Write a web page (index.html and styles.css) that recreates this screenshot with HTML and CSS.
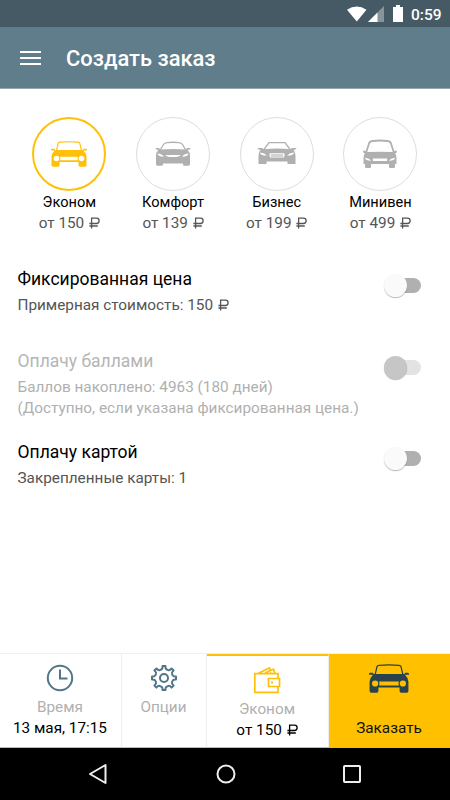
FILE: index.html
```html
<!DOCTYPE html>
<html lang="ru">
<head>
<meta charset="utf-8">
<title>Создать заказ</title>
<link rel="stylesheet" href="styles.css">
</head>
<body>
<svg class="defs" aria-hidden="true">
  <symbol id="car" viewBox="0 0 36 26">
    <path fill="none" stroke="currentColor" stroke-width="1.1" d="M5.500 9.500 7.300 2Q7.600 1.200 9 1.100Q18 .4 27 1.100Q28.400 1.200 28.700 2L30.500 9.500"/>
    <path fill="currentColor" fill-rule="evenodd" d="M0 9q0-1.200 1.200-1.200h2q.8 0 .8 1.200h28q0-1.200.8-1.200h2Q36 7.800 36 9v.6h-3.600q3.100 3 3.100 6.400V24q0 1.800-1.500 1.800h-5q-1.500 0-1.500-1.800v-3H8.500v3q0 1.800-1.500 1.800H2Q.5 25.800.5 24v-8q0-3.400 3.100-6.400H0zM5.500 14.700a2.800 2.800 0 1 0 0 5.600 2.800 2.800 0 0 0 0-5.600zm25 0a2.800 2.800 0 1 0 0 5.600 2.800 2.800 0 0 0 0-5.600zM9 15.800q1 1.700 0 3.400h18q-1-1.700 0-3.400z"/>
  </symbol>
  <symbol id="ruble" viewBox="0 0 11 12">
    <path fill="none" stroke="currentColor" stroke-width="1.300" d="M2.600 11.500V1.100H7.500Q10.100 1.100 10.100 3.700T7.500 6.500H.4M.4 9H8.800"/>
  </symbol>
</svg>
<div class="status">
  <svg width="20" height="16" viewBox="0 0 20 16"><path fill="#fff" d="M0 3.700Q9.700-2.600 19.500 3.700L9.800 15.500z"/></svg>
  <svg class="signal" width="16" height="16" viewBox="0 0 16 16"><path fill="#87949b" d="M16 0v16H0z"/><path fill="#fff" d="M9.500 6.500V16H0z"/></svg>
  <svg class="battery" width="10" height="17" viewBox="0 0 10 17"><path fill="#fff" d="M3 0h4v2h3v15H0V2h3z"/></svg>
  <span>0:59</span>
</div>
<header class="appbar">
  <svg width="21" height="16" viewBox="0 0 21 16"><path stroke="#fff" stroke-width="2" d="M0 2h21M0 8h21M0 14h21"/></svg>
  <h1>Создать заказ</h1>
</header>
<main>
  <div class="tariffs">
    <div class="tariff active">
      <div class="ring"><svg width="36" height="26"><use href="#car"/></svg></div>
      <b>Эконом</b><span class="price">от 150 <svg class="rub"><use href="#ruble"/></svg></span>
    </div>
    <div class="tariff">
      <div class="ring"><svg width="36" height="26" viewBox="0 0 36 26"><path fill="none" stroke="currentColor" stroke-width="1.300" d="M5 9.500 8.500 3.500Q9.500 2 12 1.700Q18 .8 24 1.700Q26.500 2 27.500 3.500L31 9.500"/><path fill="currentColor" fill-rule="evenodd" d="M.8 8.200Q0 7 1.500 7H4l1 1.500Q18 7.500 31 8.500L32 7h2.500q1.500 0 .7 1.200l-2.600.8Q35 11 35 15v8q0 1.800-1.500 1.800H29q-1 0-1-2.300H8q0 2.300-1 2.300H2.500Q1 24.800 1 23v-8q0-4 2.400-6zM2.500 12.500q0 3 6.300 3.200-1.800-3-6.300-3.200zm31 0q0 3-6.300 3.200 1.800-3 6.300-3.200zM10 14q2.500 2 4.500 2h7q2 0 4.500-2z"/></svg></div>
      <b>Комфорт</b><span class="price">от 139 <svg class="rub"><use href="#ruble"/></svg></span>
    </div>
    <div class="tariff">
      <div class="ring"><svg width="40" height="26" viewBox="0 0 40 26"><path fill="none" stroke="currentColor" stroke-width="1.300" d="M6.500 9 12 1.700H28L33.500 9"/><path fill="currentColor" fill-rule="evenodd" d="M.5 8Q.5 7 2 7h3l1.500 1.200Q20 7 33.500 8.200L35 7h3q1.500 0 1.500 1l-3 1Q38.500 11 38.500 14.500v8.500h-8V20.500h-21v2.500h-8V14.500q0-3.500 2-5.500zM2.800 11.500q.5 3.200 7 3.100-2-2.500-7-3.100zm34.400 0q-.5 3.200-7 3.100 2-2.500 7-3.100zM13 12.300q-1.600 2.100 0 4.200h14q1.600-2.100 0-4.200z"/><path fill="#d4d4d4" d="M14 13h12q1 1.500 0 3H14q-1-1.500 0-3z"/></svg></div>
      <b>Бизнес</b><span class="price">от 199 <svg class="rub"><use href="#ruble"/></svg></span>
    </div>
    <div class="tariff">
      <div class="ring"><svg width="36" height="30" viewBox="0 0 36 30"><path fill="none" stroke="currentColor" stroke-width="1.800" d="M4 14 7 4.500Q7.700 2.200 10.500 2Q18 1 25.500 2Q28.300 2.200 29 4.500L32 14"/><path fill="currentColor" fill-rule="evenodd" d="M1.200 13.500Q.6 11 2.600 11.500L5 13Q18 12.500 31 13L33.400 11.500Q35.400 11 34.800 13.500L33.200 14.200Q34.500 16 34.500 19v6h-1.500v2.500q0 1.500-1.500 1.500h-3q-1.500 0-1.500-1.500V25H9v2.500Q9 29 7.500 29h-3Q3 29 3 27.500V25H1.500v-6q0-3 1.300-4.800zM3 19q.6 2.800 6 2.700Q7.600 19.300 3 19zm30 0q-.6 2.800-6 2.700 1.400-2.400 6-2.700zM11 19.500q-.5 1.300 0 2.600h14q.5-1.300 0-2.600z"/></svg></div>
      <b>Минивен</b><span class="price">от 499 <svg class="rub"><use href="#ruble"/></svg></span>
    </div>
  </div>
  <div class="options">
    <section class="row"><div><h2>Фиксированная цена</h2><p>Примерная стоимость: 150 <svg class="rub"><use href="#ruble"/></svg></p></div><i class="switch"></i></section>
    <section class="row disabled"><div><h2>Оплачу баллами</h2><p>Баллов накоплено: 4963 (180 дней)<br>(Доступно, если указана фиксированная цена.)</p></div><i class="switch"></i></section>
    <section class="row"><div><h2>Оплачу картой</h2><p>Закрепленные карты: 1</p></div><i class="switch"></i></section>
  </div>
</main>
<footer class="tabs">
  <div class="tab">
    <svg width="28" height="28" viewBox="0 0 28 28" fill="none" stroke="#527688" stroke-width="2"><circle cx="14" cy="14" r="12.200"/><path d="M14 5.500V14.500H21.500"/></svg>
    <span>Время</span><b>13 мая, 17:15</b>
  </div>
  <div class="tab">
    <svg width="28" height="28" viewBox="0 0 28 28" fill="none" stroke="#527688" stroke-width="2" stroke-linejoin="round"><circle cx="14" cy="14" r="4"/><path d="M11.200 5.500Q12.700 5 12.500 2h3q-.2 3 1.300 3.500l1.400.6q1.500.6 3.400-1.600l2 2q-2.200 1.900-1.600 3.400l.6 1.300q.5 1.500 3.400 1.300v3q-2.900-.2-3.400 1.300l-.6 1.400q-.6 1.500 1.600 3.400l-2 2q-1.900-2.200-3.400-1.600l-1.400.6q-1.500.5-1.300 3.400h-3q.2-2.900-1.300-3.400l-1.400-.6q-1.500-.6-3.400 1.600l-2-2q2.200-1.900 1.600-3.400l-.6-1.400Q4.900 15.300 2 15.500v-3q2.900.2 3.400-1.300L6 9.900q.6-1.500-1.600-3.400l2-2Q8.300 6.700 9.800 6.100z"/></svg>
    <span>Опции</span>
  </div>
  <div class="tab current">
    <svg width="28" height="28" viewBox="0 0 28 28" fill="none" stroke="#ffc107" stroke-width="1.700"><path d="M25 12.500V7.700H1.800V26.300H25V20.500M15.500 12.500H26.500V20.500H15.500zM5.500 7.200 16.500 2 18 6.500M12 7 20.500 3.200 22 7.500"/><path fill="#ffc107" stroke="none" d="M18 15.500h2v2h-2z"/></svg>
    <span>Эконом</span><b>от 150 <svg class="rub"><use href="#ruble"/></svg></b>
  </div>
  <div class="tab order">
    <svg class="cab" width="40" height="29"><use href="#car"/></svg>
    <b>Заказать</b>
  </div>
</footer>
<nav class="navbar">
  <svg width="20" height="22" viewBox="0 0 20 22"><path fill="none" stroke="#eee" stroke-width="2" stroke-linejoin="round" d="M17.500 2V20L2 11z"/></svg>
  <svg width="20" height="20" viewBox="0 0 20 20"><circle cx="10" cy="10" r="8.500" fill="none" stroke="#eee" stroke-width="2"/></svg>
  <svg width="18" height="18" viewBox="0 0 18 18"><rect x="1" y="1" width="16" height="16" rx=".7" fill="none" stroke="#eee" stroke-width="2"/></svg>
</nav>
</body>
</html>
```
FILE: styles.css
```css
* { box-sizing: border-box; }
body { margin: 0; width: 450px; height: 800px; display: flex; flex-direction: column; overflow: hidden; background: #fff; color: #000; font-family: Roboto, "Noto Sans", sans-serif; }
svg { display: block; flex: none; }
h1, h2, p { margin: 0; font-weight: 400; }
b { font-weight: 400; }
.defs { width: 0; height: 0; position: absolute; }
.status { height: 27px; background: #465a65; color: #fff; display: flex; align-items: center; padding: 0 9px 0 347px; font-size: 15.500px; font-weight: 500; }
.signal { margin-left: 1px; }
.battery { margin-left: 9px; }
.status span { margin-left: 8px; padding-top: 2px; }
.appbar { height: 62px; background: #607d8b; color: #fff; display: flex; align-items: center; padding: 0 0 0 20px; border-bottom: 1px solid #93a6af; }
.appbar h1 { margin: 3px 0 0 25px; font-size: 21.900px; font-weight: 500; line-height: 28px; }
main { flex: 1; min-height: 0; }
.tariffs { display: grid; grid-template-columns: repeat(4, 103.700px); padding: 28px 0 0 17.500px; }
.tariff { display: flex; flex-direction: column; align-items: center; font-size: 14.600px; line-height: 20px; }
.ring { width: 74px; height: 74px; margin-bottom: 1px; border-radius: 50%; border: 1px solid #ddd; color: #b0b0b0; display: flex; align-items: center; justify-content: center; }
.active .ring { border: 2px solid #ffc107; color: #ffc107; }
.price { color: #555; font-size: 15.300px; margin-top: 1px; }
.rub { display: inline-block; width: 11px; height: 12px; vertical-align: -1px; margin-left: 1px; }
.options { padding: 33px 29px 0 17.500px; }
.row { display: flex; justify-content: space-between; height: 82px; }
.row.disabled { height: 91px; color: #b5b5b5; }
.row h2 { font-size: 17.500px; line-height: 26px; }
.row p { font-size: 15.320px; line-height: 21px; margin-top: 3px; color: #555; white-space: nowrap; }
.row.disabled p { color: #b0b0b0; }
.switch { position: relative; width: 36px; height: 15px; margin-top: 12px; border-radius: 8px; background: #b0b0b0; }
.switch::before { content: ""; position: absolute; left: -1px; top: -4px; width: 23px; height: 23px; border-radius: 50%; background: #fafafa; box-shadow: 0 1px 1px #0004; }
.disabled .switch { background: #e3e3e3; }
.disabled .switch::before { background: #c6c6c6; }
.tabs { height: 95px; display: grid; grid-template-columns: 122px 85px 122px 121px; border-top: 1px solid #f0f0f0; border-bottom: 1px solid #bbb; }
.tab { border-right: 1px solid #eee; padding: 10px 1px 0 0; display: flex; flex-direction: column; align-items: center; font-size: 15.300px; line-height: 21px; }
.tab span { color: #b0b0b0; margin-top: 5px; }
.tab.current { border-top: 2px solid #ffc107; }
.tab.order { border: 0; background: #ffc000; }
.cab { color: #29434e; }
.order b { margin-top: 25px; color: #111; }
.navbar { height: 52px; background: #000; display: flex; justify-content: space-between; align-items: center; padding: 0 89px 0 88px; }
```
